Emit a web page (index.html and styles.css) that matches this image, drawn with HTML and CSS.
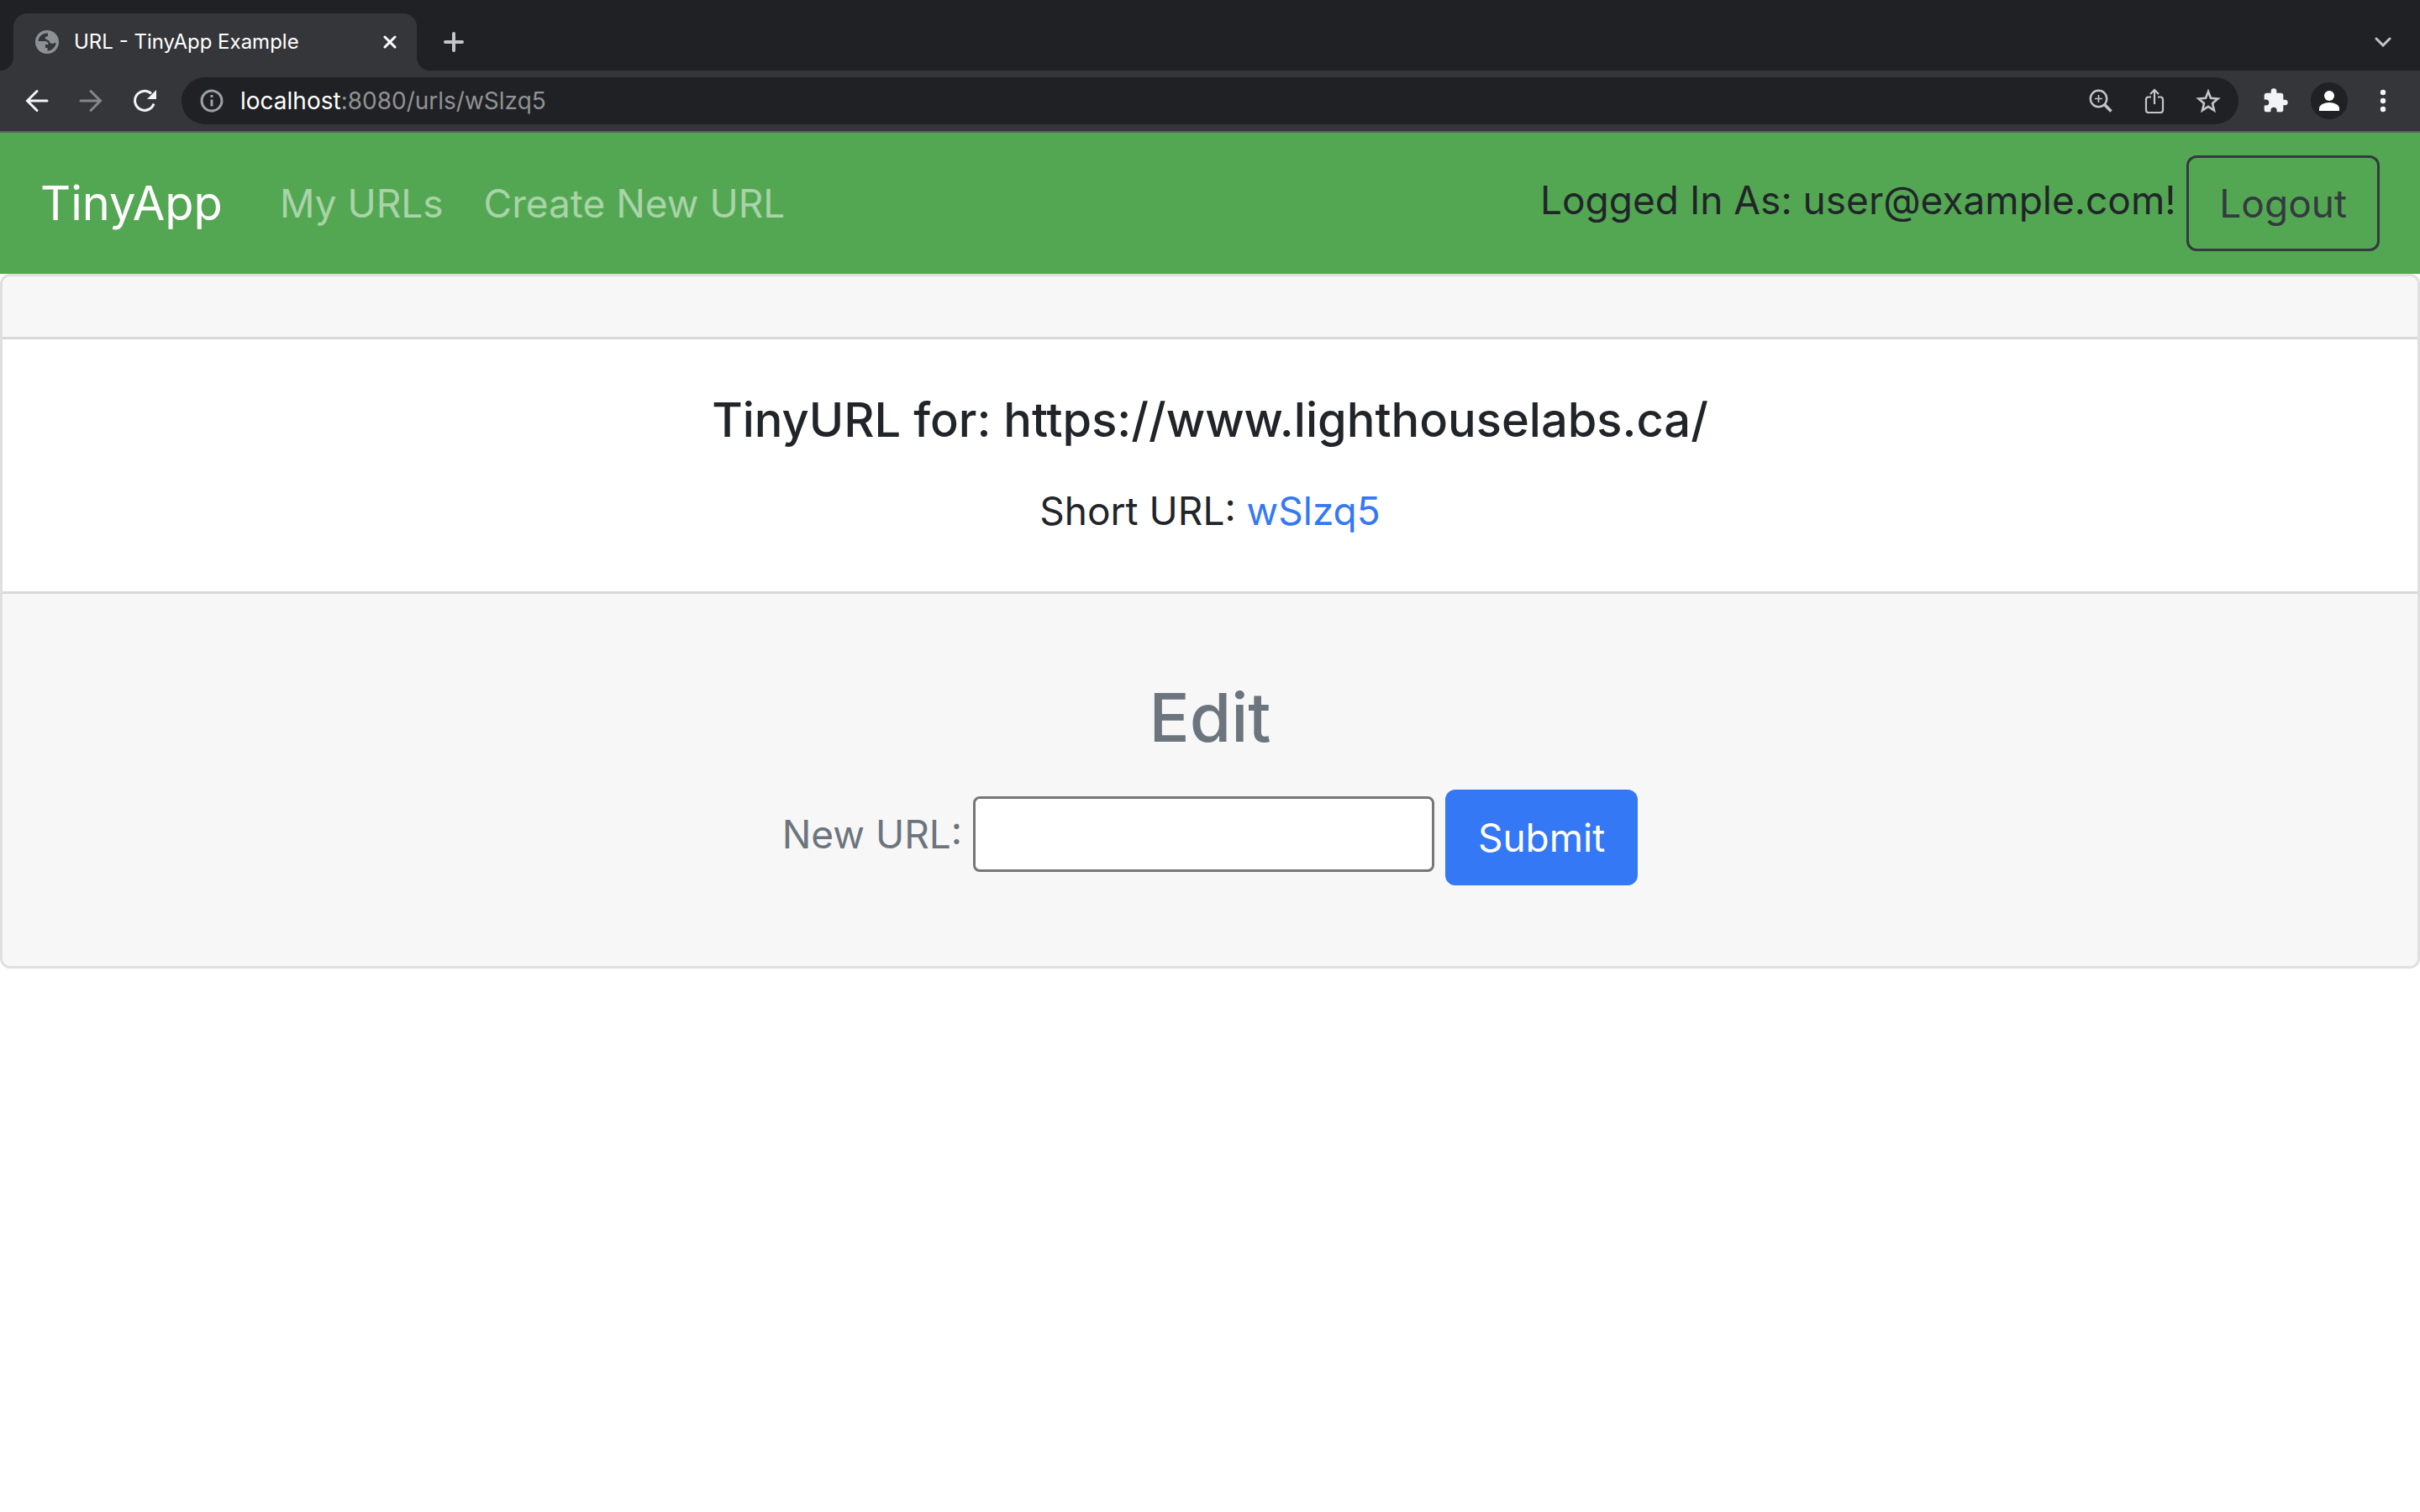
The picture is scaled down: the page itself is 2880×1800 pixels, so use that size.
FILE: index.html
```html
<!DOCTYPE html>
<html lang="en">
<head>
<meta charset="utf-8">
<title>URL - TinyApp Example</title>
<link rel="stylesheet" href="styles.css">
</head>
<body>
<div class="browser">
  <div class="tab-strip">
    <div class="tab">
      <svg width="28" height="28" viewBox="0 0 28 28" aria-hidden="true"><circle cx="14" cy="14" r="14" fill="#8c9196"/><path d="M15 3.500C9 3 4 7 3.500 13H11c3 0 4.500 1 4.500 4H12v4h2.500v3.500C20 24.500 24.500 20 24.500 14.500L21 16c-3 0-4-1-4.500-3.500L11.500 10c0-2 1.500-3 3.500-3z" fill="#35363a"/></svg>
      <span class="tab-title">URL - TinyApp Example</span>
      <button class="icon-button" aria-label="Close tab"><svg width="16" height="16" viewBox="0 0 16 16" fill="none" stroke="#fff" stroke-width="3" stroke-linecap="round"><path d="M2 2l12 12M14 2L2 14"/></svg></button>
    </div>
    <button class="icon-button new-tab" aria-label="New tab"><svg width="24" height="24" viewBox="0 0 24 24" fill="none" stroke="#c4c5c9" stroke-width="4" stroke-linecap="round"><path d="M12 2v20M2 12h20"/></svg></button>
    <button class="icon-button tab-search" aria-label="Search tabs"><svg width="20" height="12" viewBox="0 0 20 12" fill="none" stroke="#c4c5c9" stroke-width="3" stroke-linecap="round"><path d="M2 2l8 8 8-8"/></svg></button>
  </div>
  <div class="toolbar">
    <div class="history">
      <button class="icon-button" aria-label="Back"><svg width="28" height="28" viewBox="0 0 28 28" fill="none" stroke="#f1f3f4" stroke-width="3" stroke-linecap="round"><path d="M26 14H3M14 2.500L2.500 14 14 25.500"/></svg></button>
      <button class="icon-button" aria-label="Forward"><svg width="28" height="28" viewBox="0 0 28 28" fill="none" stroke="#85868a" stroke-width="3" stroke-linecap="round"><path d="M2 14h23M14 2.500L25.500 14 14 25.500"/></svg></button>
      <button class="icon-button" aria-label="Reload"><svg width="28" height="28" viewBox="0 0 28 28"><path d="M25 17.500A11.500 11.500 0 1 1 22 5.500" fill="none" stroke="#f1f3f4" stroke-width="3"/><path d="M28 1v11H17z" fill="#f1f3f4"/></svg></button>
    </div>
    <div class="address-bar">
      <svg width="28" height="28" viewBox="0 0 28 28" aria-hidden="true"><circle cx="14" cy="14" r="12" fill="none" stroke="#9aa0a6" stroke-width="3"/><path d="M12.500 12.500h3v8h-3zM12.500 7h3v3h-3z" fill="#9aa0a6"/></svg>
      <p class="address"><span class="address-host">localhost</span>:8080/urls/wSlzq5</p>
      <button class="icon-button tool" aria-label="Zoom"><svg width="28" height="28" viewBox="0 0 28 28" fill="none" stroke="#c4c5c9"><circle cx="11.500" cy="11.500" r="9.700" stroke-width="2.400"/><path d="M18.500 18.500l8 8" stroke-width="3.500"/><path d="M11.500 7v9M7 11.500h9" stroke-width="1.600"/></svg></button>
      <button class="icon-button tool" aria-label="Share"><svg width="28" height="30" viewBox="0 0 28 30" fill="none" stroke="#c4c5c9" stroke-width="2.200"><path d="M10 10.500H7q-3 0-3 3V26q0 3 3 3h14q3 0 3-3V13.500q0-3-3-3h-3M14 19V2.500M9 7l5-5 5 5"/></svg></button>
      <button class="icon-button tool" aria-label="Bookmark"><svg width="30" height="30" viewBox="0 0 30 30" fill="none" stroke="#c4c5c9" stroke-width="2.600"><path d="M15 4l3 7.800 8.500.7-6.500 5.500 2 8.300-7-4.500-7 4.500 2-8.300-6.500-5.500 8.500-.7z"/></svg></button>
    </div>
    <div class="actions">
      <button class="icon-button tool" aria-label="Extensions"><svg width="32" height="32" viewBox="0 0 24 24" fill="#f1f3f4"><path d="M20.500 11H19V7c0-1.100-.9-2-2-2h-4V3.500a2.500 2.500 0 0 0-5 0V5H4c-1.100 0-2 .9-2 2v3.800h1.500a2.700 2.700 0 0 1 0 5.400H2V20c0 1.100.9 2 2 2h3.800v-1.500a2.700 2.700 0 0 1 5.400 0V22H17c1.100 0 2-.9 2-2v-4h1.500a2.500 2.500 0 0 0 0-5z"/></svg></button>
      <button class="icon-button tool" aria-label="Profile"><svg width="44" height="44" viewBox="0 0 44 44"><circle cx="22" cy="22" r="22" fill="#202124"/><circle cx="22" cy="16" r="6" fill="#fff"/><path d="M10 34v-3c0-4 6-7 12-7s12 3 12 7v3z" fill="#fff"/></svg></button>
      <button class="icon-button tool" aria-label="Menu"><svg width="8" height="28" viewBox="0 0 8 28" fill="#f1f3f4"><circle cx="4" cy="4" r="3.200"/><circle cx="4" cy="14" r="3.200"/><circle cx="4" cy="24" r="3.200"/></svg></button>
    </div>
  </div>
</div>

<nav class="navbar">
  <a class="brand" href="#">TinyApp</a>
  <a class="nav-link" href="#">My URLs</a>
  <a class="nav-link" href="#">Create New URL</a>
  <form class="session">
    Logged In As: user@example.com!
    <button class="button button-outline" type="button">Logout</button>
  </form>
</nav>

<main class="card">
  <div class="card-header"></div>
  <div class="card-body">
    <h1 class="card-title">TinyURL for: https://www.lighthouselabs.ca/</h1>
    <p class="card-text">Short URL: <a class="short-link" href="#">wSlzq5</a></p>
  </div>
  <div class="card-footer">
    <h2 class="edit-title">Edit</h2>
    <form>
      <label for="new-url">New URL:</label>
      <input class="url-input" id="new-url" type="text">
      <button class="button button-primary" type="button">Submit</button>
    </form>
  </div>
</main>
</body>
</html>
```
FILE: styles.css
```css
* { box-sizing: border-box; }

body {
  margin: 0;
  background: #fff;
  color: #212529;
  font: 400 46px/72px Inter, "Liberation Sans", sans-serif;
}

h1, h2, p { margin: 0; }
a { text-decoration: none; }
svg { display: block; }

/* Browser window */
.browser {
  background: #35363a;
  border-bottom: 2px solid #5f6064;
}

.icon-button {
  padding: 0;
  border: 0;
  background: none;
}

.tool {
  display: flex;
  align-items: center;
  justify-content: center;
  width: 44px;
  height: 44px;
}

.tab-strip {
  display: flex;
  align-items: center;
  height: 84px;
  padding: 16px 34px 0 16px;
  background: #202124;
}

.tab {
  position: relative;
  display: flex;
  align-items: center;
  width: 480px;
  height: 68px;
  padding: 0 24px 0 26px;
  border-radius: 16px 16px 0 0;
  background: #35363a;
}

/* Flared feet of the active tab */
.tab::before,
.tab::after {
  content: "";
  position: absolute;
  bottom: 0;
  width: 16px;
  height: 16px;
}
.tab::before {
  right: 100%;
  background: radial-gradient(circle at 0 0, #202124 16px, #35363a 16px);
}
.tab::after {
  left: 100%;
  background: radial-gradient(circle at 100% 0, #202124 16px, #35363a 16px);
}

.tab-title {
  flex: 1;
  margin-left: 18px;
  color: #fff;
  font-size: 24px;
  line-height: 32px;
}

.new-tab { margin-left: 32px; }
.tab-search { margin-left: auto; }

.toolbar {
  display: flex;
  align-items: center;
  height: 72px;
  padding: 0 22px 0 30px;
}

.history {
  display: flex;
  gap: 36px;
  margin-right: 30px;
}

.address-bar {
  display: flex;
  flex: 1;
  align-items: center;
  gap: 20px;
  height: 56px;
  padding: 0 14px 0 22px;
  border-radius: 28px;
  background: #202124;
}

.address {
  flex: 1;
  color: #919295;
  font-size: 28px;
  line-height: 36px;
}
.address-host { color: #fff; }

.actions {
  display: flex;
  align-items: center;
  gap: 20px;
  margin-left: 22px;
}

/* Site navigation */
.navbar {
  display: flex;
  align-items: center;
  padding: 24px 48px;
  background: #54a752;
}

.brand {
  margin-right: 44px;
  padding: 15px 0;
  color: #fff;
  font-size: 56px;
  line-height: 90px;
}

.nav-link {
  padding: 0 24px;
  color: rgba(255, 255, 255, .5);
}

.session { margin-left: auto; }

.button {
  padding: 18px 36px;
  border: 3px solid;
  border-radius: 12px;
  font: inherit;
  vertical-align: middle;
}
.button-outline {
  border-color: #343a40;
  background: none;
  color: #343a40;
}
.button-primary {
  border-color: #3478f6;
  background: #3478f6;
  color: #fff;
}

/* URL card */
.card {
  border: 3px solid #dfdfdf;
  border-radius: 12px;
  text-align: center;
}

.card-header {
  padding: 36px;
  border-bottom: 3px solid #d8d8d8;
  border-radius: 9px 9px 0 0;
  background: #f7f7f7;
}

.card-body { padding: 60px; }

.card-title {
  margin-bottom: 36px;
  font-size: 56px;
  font-weight: 500;
  line-height: 72px;
}

.short-link { color: #3478f6; }

.card-footer {
  padding: 96px 60px;
  border-top: 3px solid #d8d8d8;
  border-radius: 0 0 9px 9px;
  background: #f7f7f7;
  color: #6c757d;
}

.edit-title {
  margin-bottom: 36px;
  font-size: 80px;
  font-weight: 500;
  line-height: 101px;
}

.url-input {
  width: 549px;
  height: 90px;
  padding: 3px 6px;
  border: 3px solid #767676;
  border-radius: 8px;
  background: #fff;
  font: inherit;
}
```
